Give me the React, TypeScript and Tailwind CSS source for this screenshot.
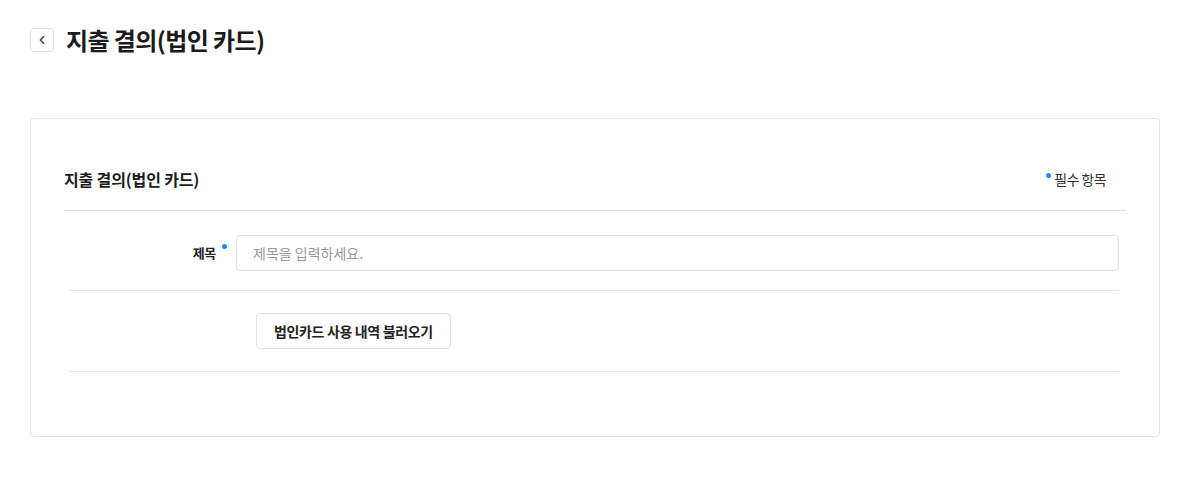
import { ChevronLeft } from "lucide-react";

export default function App() {
  return (
    <div className="min-h-screen bg-white pl-[30px] pr-[32px] pt-7 font-['Noto_Sans_CJK_KR','Noto_Sans',sans-serif] text-[#222]">
      <header className="flex items-center gap-3">
        <button
          type="button"
          className="flex h-6 w-6 items-center justify-center rounded border border-[#e3e3e3] bg-white text-[#333]"
        >
          <ChevronLeft size={14} strokeWidth={2} />
        </button>
        <h1 className="text-2xl font-bold leading-6 tracking-tight text-[#1b1b1b]">지출 결의(법인 카드)</h1>
      </header>

      <section className="mt-[66px] rounded border border-[#e5e5e5] bg-white px-[33px] pb-[64px] pt-[48px]">
        <div className="flex items-center justify-between border-b border-[#e3e3e3] pb-[19px]">
          <h2 className="text-base font-bold tracking-[-0.01em] text-[#1b1b1b]">지출 결의(법인 카드)</h2>
          <span className="relative mr-[20px] text-sm tracking-[-0.04em] text-[#333]">
            <span className="absolute -left-[8px] top-[4px] h-[5px] w-[5px] rounded-full bg-[#1a8cff]" />
            필수 항목
          </span>
        </div>

        <div className="ml-[5px] mr-[7px]">
          <div className="flex items-center border-b border-[#e8e8e8] pb-[19px] pt-6">
            <label className="flex w-[167px] items-start justify-end pr-[9px] text-[13px] font-bold tracking-tight text-[#222]">
              <span className="leading-5">제목</span>
              <span className="ml-[6px] mt-[1px] h-[5px] w-[5px] rounded-full bg-[#1a8cff]" />
            </label>
            <input
              type="text"
              placeholder="제목을 입력하세요."
              className="h-9 flex-1 rounded border border-[#e3e3e3] px-4 text-sm text-[#222] outline-none placeholder:text-[#999]"
            />
          </div>

          <div className="border-b border-[#e8e8e8] py-[22px] pl-[187px]">
            <button
              type="button"
              className="h-9 rounded border border-[#e0e0e0] bg-white px-[17px] text-sm font-bold tracking-tight text-[#222]"
            >
              법인카드 사용 내역 불러오기
            </button>
          </div>
        </div>
      </section>
    </div>
  );
}
